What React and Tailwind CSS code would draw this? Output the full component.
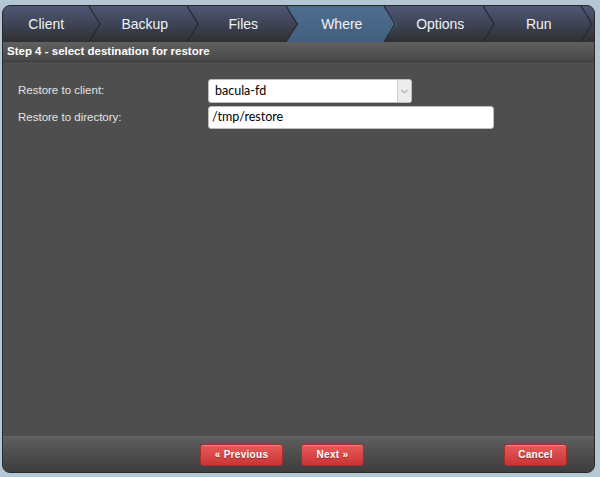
import React from 'react';

const TABS = ['Client', 'Backup', 'Files', 'Where', 'Options', 'Run'];
const ACTIVE = 'Where';

const Chevron = () => (
    <svg className="absolute right-0 top-0 h-full w-[14px] z-10" viewBox="0 0 14 36" preserveAspectRatio="none">
        <polyline points="1,0 12,18 1,36" fill="none" stroke="#26282e" strokeWidth="1.2" />
    </svg>
);

const Tab = ({ label, active }) => (
    <div className="relative flex-1 flex items-center justify-center pr-3 text-[14px] text-[#eef2f7]">
        {active && (
            <div className="absolute top-0 bottom-0 -left-[13px] right-0 bg-gradient-to-b from-[#4f6d8e] to-[#425f7e] [clip-path:polygon(0_0,calc(100%-13px)_0,100%_50%,calc(100%-13px)_100%,0_100%,13px_50%)]" />
        )}
        <span className="relative z-10">{label}</span>
        <Chevron />
    </div>
);

const RedButton = ({ children, className = '' }) => (
    <button className={`h-[22px] rounded-[3px] border border-[#a82a2a] bg-gradient-to-b from-[#e85a5a] to-[#c93434] text-white text-[10px] font-bold tracking-[0.3px] [text-shadow:0_1px_1px_rgba(0,0,0,0.35)] shadow-[inset_0_1px_0_rgba(255,255,255,0.25)] ${className}`}>
        {children}
    </button>
);

export default function App() {
    return (
        <div className="w-[600px] h-[477px] bg-[#b4c7d5] pt-[5px] pl-[2px]" style={{ fontFamily: '"Liberation Sans", Arial, sans-serif' }}>
            <div className="w-[593px] h-[468px] rounded-[8px] border border-[#2a2a2a] overflow-hidden flex flex-col bg-[#4e4e4e]">
                {/* Tabs */}
                <div className="h-[36px] flex bg-gradient-to-b from-[#4e5876] to-[#2f3035]">
                    {TABS.map(t => <Tab key={t} label={t} active={t === ACTIVE} />)}
                </div>

                {/* Step header */}
                <div className="h-[20px] flex items-center px-[4px] bg-gradient-to-b from-[#606060] to-[#484848] border-b border-[#3c3c3c] text-[11.5px] font-bold text-white">
                    Step 4 - select destination for restore
                </div>

                {/* Body */}
                <div className="flex-1 pl-[15px] pt-[17px] text-[11.5px] text-[#e4e4e4]">
                    <div className="flex items-center h-[24px]">
                        <span className="w-[190px]">Restore to client:</span>
                        <div className="w-[204px] h-[24px] flex bg-white border border-[#bdbdbd] rounded-[3px] overflow-hidden">
                            <span className="flex-1 flex items-center pl-[6px] text-[12.5px] text-black" style={{ fontFamily: 'Lato, "Noto Sans", sans-serif' }}>bacula-fd</span>
                            <span className="w-[14px] flex items-center justify-center bg-[#ececec] border-l border-[#cfcfcf]">
                                <svg width="7" height="5" viewBox="0 0 7 5"><polyline points="0.5,1 3.5,4 6.5,1" fill="none" stroke="#8a8a8a" strokeWidth="1" /></svg>
                            </span>
                        </div>
                    </div>
                    <div className="flex items-center h-[23px] mt-[3px]">
                        <span className="w-[190px]">Restore to directory:</span>
                        <div className="w-[286px] h-[23px] flex items-center bg-white border border-[#bdbdbd] rounded-[3px] pl-[3px] text-[12.5px] text-black" style={{ fontFamily: 'Lato, "Noto Sans", sans-serif' }}>
                            /tmp/restore
                        </div>
                    </div>
                </div>

                {/* Footer */}
                <div className="h-[36px] flex items-center border-t border-[#666666] bg-gradient-to-b from-[#5e5e5e] to-[#3d3d3d]">
                    <RedButton className="ml-[197px] w-[83px]">« Previous</RedButton>
                    <RedButton className="ml-[18px] w-[63px]">Next »</RedButton>
                    <RedButton className="ml-[140px] w-[63px]">Cancel</RedButton>
                </div>
            </div>
        </div>
    );
}
